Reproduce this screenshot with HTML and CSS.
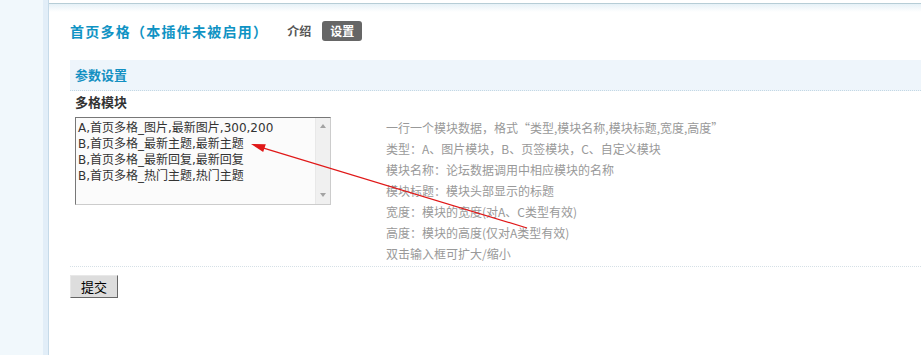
FILE: index.html
```html
<!DOCTYPE html>
<html lang="zh-CN">
<head>
<meta charset="utf-8">
<title>首页多格</title>
<link rel="stylesheet" href="styles.css">
</head>
<body>
<div class="layout">
  <aside class="sidebar"></aside>
  <main class="main">
    <div class="topbar"></div>
    <div class="content">
      <div class="titlebar">
        <h3 class="title">首页多格（本插件未被启用）</h3>
        <ul class="tabs">
          <li class="tab">介绍</li>
          <li class="tab active">设置</li>
        </ul>
      </div>
      <div class="panel">
        <div class="panel-head">参数设置</div>
        <div class="field-label">多格模块</div>
        <div class="field-row">
          <div class="field-input">
            <div class="ta-box">
              <textarea class="ta">A,首页多格_图片,最新图片,300,200
B,首页多格_最新主题,最新主题
B,首页多格_最新回复,最新回复
B,首页多格_热门主题,热门主题</textarea>
              <div class="sb">
                <span class="sb-up"></span>
                <span class="sb-down"></span>
              </div>
            </div>
          </div>
          <div class="field-help">
            <p>一行一个模块数据，格式“类型,模块名称,模块标题,宽度,高度”</p>
            <p>类型：A、图片模块，B、页签模块，C、自定义模块</p>
            <p>模块名称：论坛数据调用中相应模块的名称</p>
            <p>模块标题：模块头部显示的标题</p>
            <p>宽度：模块的宽度(对A、C类型有效)</p>
            <p>高度：模块的高度(仅对A类型有效)</p>
            <p>双击输入框可扩大/缩小</p>
          </div>
        </div>
        <div class="actions">
          <button class="btn" type="button">提交</button>
        </div>
      </div>
    </div>
  </main>
</div>
<svg class="annot" width="921" height="355" viewBox="0 0 921 355">
  <line x1="527" y1="228" x2="262" y2="147.6" stroke="#e01818" stroke-width="1.2"/>
  <polygon points="251,144 265.8,144.2 263.2,152" fill="#e01818"/>
</svg>
</body>
</html>
```
FILE: styles.css
```css
* { box-sizing: border-box; }
html, body { margin: 0; padding: 0; }
body {
  background: #fff;
  font-family: "Noto Sans CJK SC", "DejaVu Sans", sans-serif;
  font-size: 12px;
  color: #333;
  width: 921px;
  height: 355px;
  overflow: hidden;
  position: relative;
}
.layout {
  display: flex;
  min-height: 355px;
}
.sidebar {
  width: 49px;
  flex: none;
  background: linear-gradient(to right, #f1f8fc 0, #f1f8fc 43px, #e2eef8 43px, #e2eef8 48px);
  border-right: 1px solid #c6dae8;
}
.main {
  flex: 1;
  padding-top: 3px;
}
.topbar {
  height: 9px;
  border-top: 1px solid #b6cdd6;
  background: linear-gradient(#e6f1f7, #fff);
}
.content {
  padding-left: 21px;
}
.titlebar {
  display: flex;
  align-items: center;
  height: 20px;
  margin-top: 9px;
}
.title {
  margin: 0;
  font-size: 14px;
  line-height: 20px;
  font-weight: bold;
  color: #0f93c4;
  letter-spacing: 1.25px;
}
.tabs {
  display: flex;
  align-items: center;
  list-style: none;
  margin: 0 0 0 19px;
  padding: 0;
}
.tab {
  font-size: 12px;
  font-weight: bold;
  color: #555;
  line-height: 20px;
}
.tab.active {
  background: #666;
  color: #fff;
  border-radius: 3px;
  padding: 0 8px;
  margin-left: 11px;
}
.panel {
  margin-top: 19px;
}
.panel-head {
  height: 31px;
  line-height: 29px;
  padding-left: 5px;
  background: #eef5fb;
  border-bottom: 1px dotted #c4d8e4;
  font-size: 13px;
  font-weight: bold;
  color: #1390c2;
}
.field-label {
  padding: 1px 0 0 5px;
  height: 26px;
  line-height: 20px;
  font-size: 13px;
  font-weight: bold;
  color: #333;
}
.field-row {
  display: flex;
  border-bottom: 1px dotted #d6e0e6;
  padding-bottom: 2px;
}
.field-input {
  width: 316px;
  padding-left: 5px;
  flex: none;
}
.ta-box {
  display: flex;
  width: 256px;
  height: 88px;
  border: 1px solid;
  border-color: #777 #ccc #ccc #777;
  background: #fbfbfb;
}
.ta {
  display: block;
  flex: 1;
  min-width: 0;
  height: 100%;
  margin: 0;
  padding: 2px 2px;
  resize: none;
  overflow: hidden;
  border: 0;
  outline: none;
  background: transparent;
  font-family: "DejaVu Sans", "Noto Sans CJK SC", sans-serif;
  font-size: 12px;
  line-height: 16px;
  color: #333;
}
.sb {
  width: 15px;
  flex: none;
  background: #f0f0f0;
  border-left: 1px solid #e8e8e8;
  display: flex;
  flex-direction: column;
  justify-content: space-between;
  align-items: center;
  padding: 6px 0 7px;
}
.sb-up, .sb-down {
  width: 0;
  height: 0;
  border-left: 3.5px solid transparent;
  border-right: 3.5px solid transparent;
}
.sb-up { border-bottom: 4px solid #a3a3a3; }
.sb-down { border-top: 4px solid #a3a3a3; }
.field-help {
  color: #999;
  font-size: 12px;
  line-height: 21px;
}
.field-help p {
  margin: 0;
  white-space: nowrap;
}
.actions {
  padding-top: 8px;
}
.btn {
  width: 48px;
  height: 23px;
  padding: 0;
  background: #ddd;
  border: 1px solid;
  border-color: #e8e8e8 #666 #666 #e8e8e8;
  border-radius: 0;
  font-family: "Noto Sans CJK SC", sans-serif;
  font-size: 13px;
  color: #000;
}
.annot {
  position: absolute;
  top: 0;
  left: 0;
  pointer-events: none;
}
```
